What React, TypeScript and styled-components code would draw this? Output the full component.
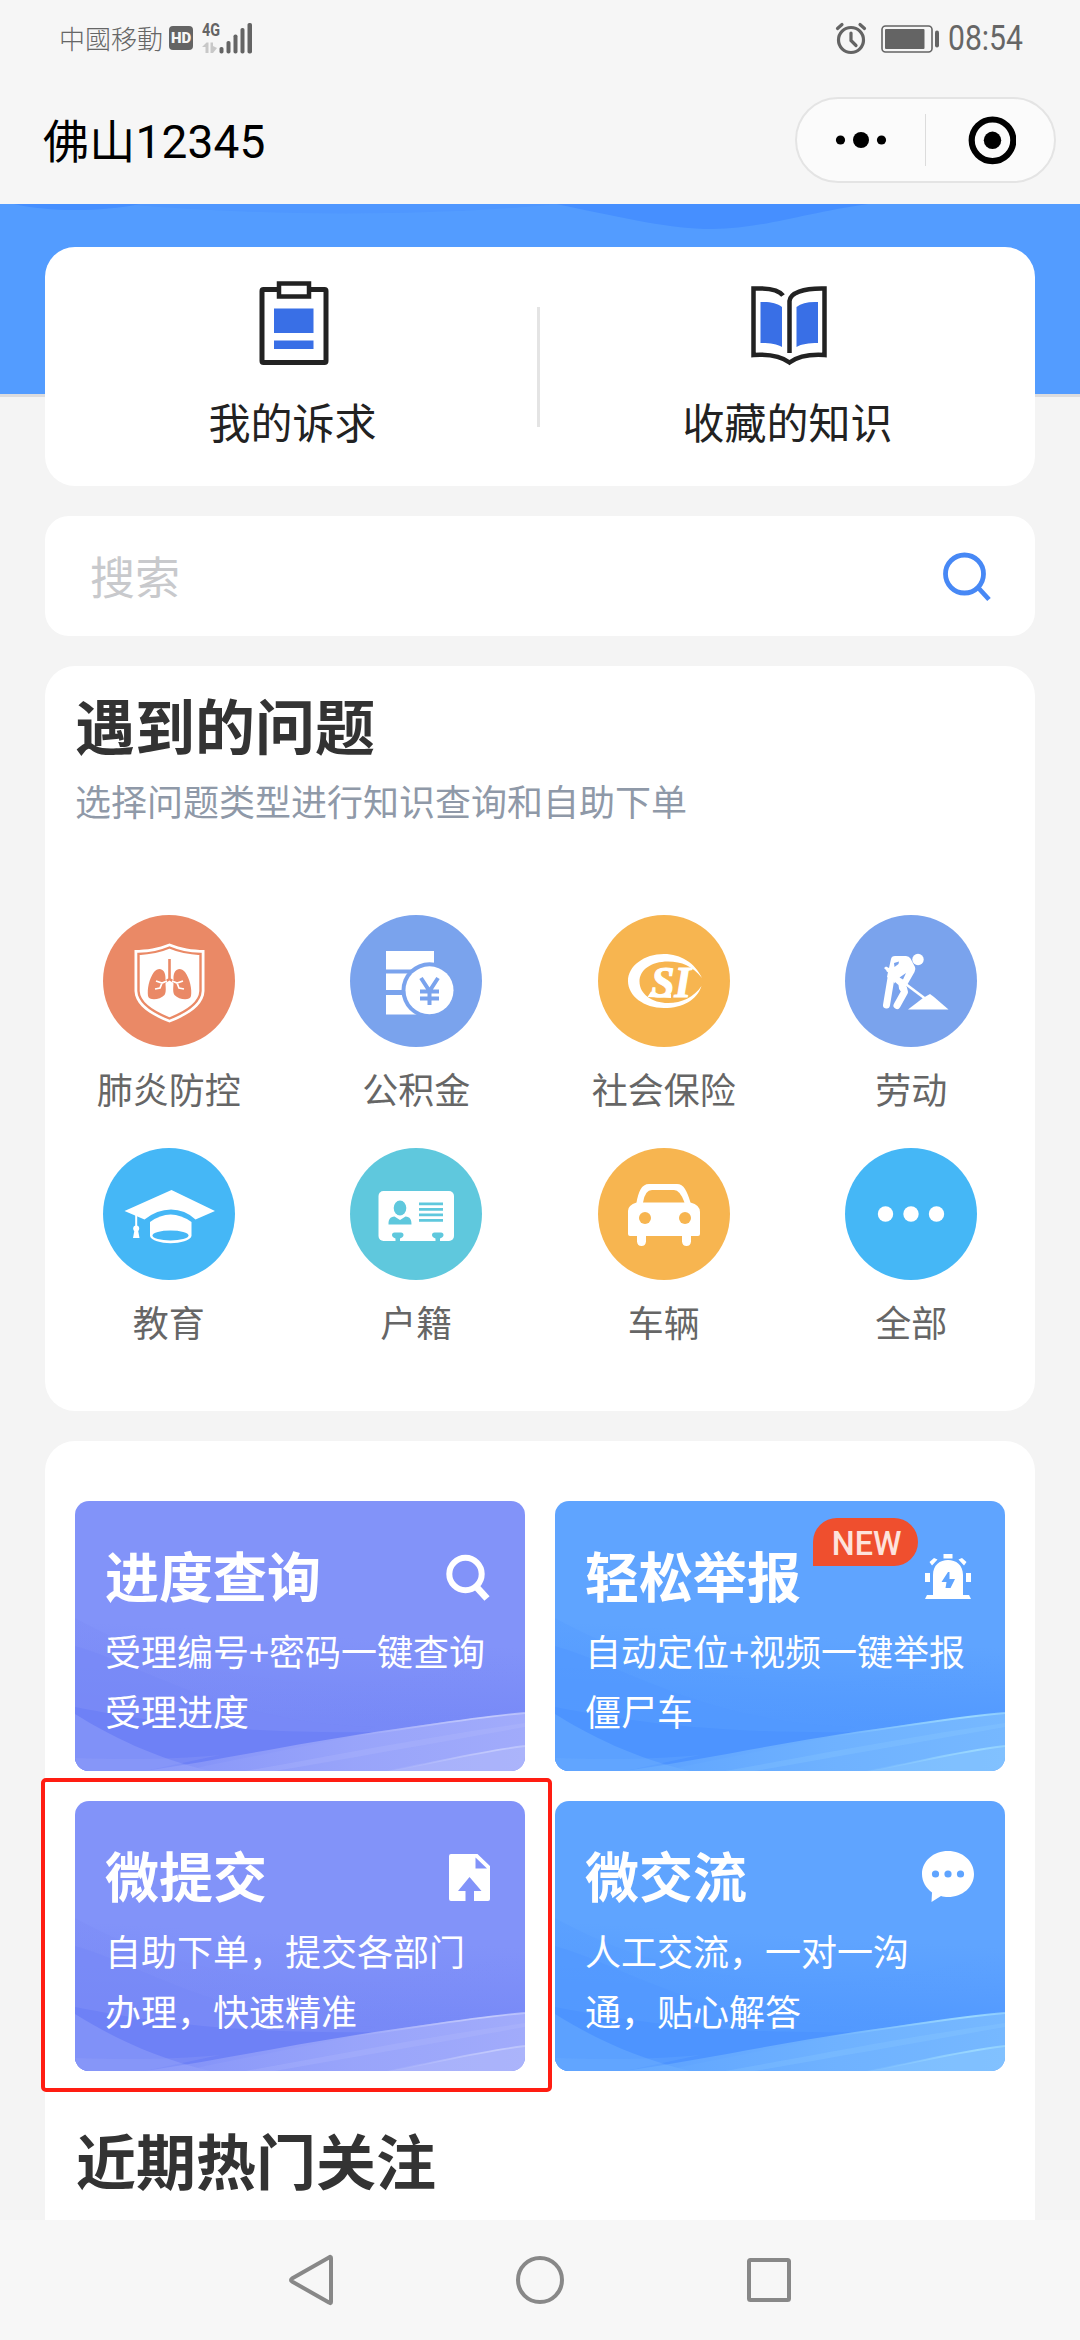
import React from 'react';
import styled, { createGlobalStyle } from 'styled-components';

const Global = createGlobalStyle`
  * { box-sizing: border-box; }
  body {
    margin: 0;
    background: #f4f4f4;
    font-family: "Noto Sans CJK SC", "Noto Sans", sans-serif;
  }
`;

const Screen = styled.div`
  width: 1080px;
  height: 2340px;
  display: flex;
  flex-direction: column;
  overflow: hidden;
  background: #f4f4f4;
`;

/* ---------- status bar and title bar ---------- */

const StatusBar = styled.div`
  height: 78px;
  flex: none;
  display: flex;
  align-items: center;
  justify-content: space-between;
  padding: 0 57px 0 59px;
  background: #f6f6f6;
  color: #666;
`;

const StatusGroup = styled.div`
  display: flex;
  align-items: center;
`;

const Carrier = styled.span`
  font: 300 26px/36px "Noto Sans CJK TC", sans-serif;
  margin: -3px 6px 0 0;
`;

const HdBadge = styled.span`
  width: 24px;
  height: 24px;
  margin-top: -2px;
  border-radius: 4px;
  background: #646464;
  color: #f6f6f6;
  font: 900 15px/24px Roboto, sans-serif;
  text-align: center;
`;

const Signal = styled.svg`
  width: 52px;
  height: 38px;
  margin: -9px 0 0 9px;
`;

const StatusIcons = styled.svg`
  width: 106px;
  height: 34px;
  margin: -3px 8px 0 0;
`;

const Clock = styled.span`
  width: 75px;
  font: 400 35px/36px Roboto, sans-serif;
  span {
    display: inline-block;
    transform: scaleX(0.86);
    transform-origin: 0 50%;
  }
`;

const TitleBar = styled.div`
  height: 126px;
  flex: none;
  display: flex;
  align-items: flex-start;
  justify-content: space-between;
  padding: 19px 24px 0 43px;
  background: #f6f6f6;
`;

const PageTitle = styled.h1`
  margin: 2px 0 0;
  font: 400 46px/86px Roboto, "Noto Sans CJK SC", sans-serif;
  letter-spacing: 0.2px;
  color: #000;
`;

const Capsule = styled.div`
  width: 261px;
  height: 86px;
  border: 2px solid #e4e4e4;
  border-radius: 43px;
  background: #fbfbfb;
  display: flex;
  align-items: center;
`;

const CapsuleButton = styled.button`
  flex: 1;
  height: 52px;
  padding: 0;
  border: 0;
  background: none;
  display: flex;
  align-items: center;
  justify-content: center;
  & + & {
    border-left: 1px solid #dcdcdc;
  }
`;

/* ---------- page ---------- */

const Content = styled.div`
  height: 2016px;
  flex: none;
  overflow: hidden;
`;

const Hero = styled.div`
  height: 193px;
  background: #539cff;
  border-bottom: 3px solid #dcdcde;
  svg { display: block; }
`;

const Main = styled.main`
  position: relative;
  margin: -150px 45px 0;
  display: flex;
  flex-direction: column;
  gap: 30px;
`;

const Card = styled.section<{ $height: number; $radius?: number }>`
  height: ${(p) => p.$height}px;
  border-radius: ${(p) => p.$radius ?? 30}px;
  background: #fff;
`;

const Shortcuts = styled(Card)`
  display: flex;
  align-items: center;
`;

const Shortcut = styled.div`
  flex: 1;
  height: 100%;
  padding-top: 32px;
  display: flex;
  flex-direction: column;
  align-items: center;
  svg { width: 90px; height: 90px; }
`;

const ShortcutLabel = styled.span`
  margin-top: 22px;
  font-size: 42px;
  line-height: 60px;
  color: #222;
`;

const Divider = styled.i`
  width: 3px;
  height: 120px;
  margin-left: -3px;
  background: #e4e4e4;
`;

const SearchBox = styled(Card)`
  display: flex;
  align-items: center;
  justify-content: space-between;
  padding: 0 43px 0 45px;
`;

const Placeholder = styled.span`
  font-size: 45px;
  line-height: 60px;
  color: #c8c9cc;
`;

const Heading = styled.h2`
  margin: 0;
  font-size: 60px;
  line-height: 84px;
  font-weight: 700;
  color: #333;
`;

const TopicHead = styled.header`
  padding: 16px 30px 0;
`;

const SubHeading = styled.p`
  margin: 7px 0 0;
  font-size: 36px;
  line-height: 54px;
  color: #8f99a8;
`;

const TopicGrid = styled.div`
  margin-top: 88px;
  display: grid;
  grid-template-columns: repeat(4, 1fr);
  grid-auto-rows: 233px;
`;

const Topic = styled.div`
  display: flex;
  flex-direction: column;
  align-items: center;
`;

const TopicIcon = styled.div<{ $color: string }>`
  width: 132px;
  height: 132px;
  border-radius: 50%;
  background: ${(p) => p.$color};
  color: ${(p) => p.$color};
  svg { display: block; }
`;

const TopicLabel = styled.span`
  margin-top: 14px;
  font-size: 36px;
  line-height: 54px;
  color: #666;
`;

const Services = styled(Card)`
  padding: 60px 30px 0;
`;

const ServiceGrid = styled.div`
  display: grid;
  grid-template-columns: 450px 450px;
  grid-auto-rows: 270px;
  gap: 30px;
`;

const Tile = styled.div`
  position: relative;
  padding: 41px 30px 0;
  color: #fff;
`;

const TileArt = styled.svg`
  position: absolute;
  inset: 0;
  border-radius: 14px;
`;

const TileHead = styled.div`
  position: relative;
  display: flex;
  justify-content: space-between;
  align-items: center;
  height: 70px;
`;

const TileTitle = styled.h3`
  margin: -4px 0 0;
  font-size: 54px;
  line-height: 70px;
  font-weight: 700;
`;

const TileIcon = styled.svg`
  width: 56px;
  height: 56px;
  flex: none;
  margin-right: -1px;
`;

const TileText = styled.p`
  position: relative;
  margin: 8px 0 0;
  font-size: 36px;
  line-height: 60px;
`;

const NewBadge = styled.span`
  position: absolute;
  left: 258px;
  top: 17px;
  width: 105px;
  height: 48px;
  border-radius: 24px 24px 24px 0;
  background: #ef4f2e;
  color: #fde3dc;
  font: 500 34px/50px Roboto, sans-serif;
  text-align: center;
  padding-left: 3px;
  span {
    display: inline-block;
    transform: scaleX(0.95);
  }
`;

const Highlight = styled.div`
  position: absolute;
  left: -34px;
  top: -23px;
  width: 511px;
  height: 314px;
  border: 4px solid #ff1d12;
  border-radius: 5px;
`;

const HotHeading = styled(Heading)`
  margin: 46px 0 0 1px;
`;

const NavBar = styled.nav`
  height: 120px;
  flex: none;
  display: flex;
  align-items: center;
  justify-content: center;
  gap: 173px;
  background: #f7f7f7;
  svg { width: 56px; height: 56px; fill: none; stroke: #888; stroke-width: 4; stroke-linejoin: round; }
`;

/* ---------- topic icons, drawn on a 132 grid ---------- */

const Icon132 = ({ children }: { children: React.ReactNode }) => (
  <svg width="132" height="132" viewBox="0 0 132 132" fill="#fff">{children}</svg>
);

const Lungs = () => (
  <Icon132>
    <path d="M66.500 28.500C55 33 44 35 31.500 35V76C32 90 47 100 66.500 107.500C86 100 101 90 101.500 76V35C89 35 78 33 66.500 28.500Z" />
    <path d="M66.500 32.500C56 37 46 38.500 35.500 39V76C36 88 49 96.500 66.500 103.500C84 96.500 97 88 97.500 76V39C87 38.500 77 37 66.500 32.500Z" fill="none" stroke="currentColor" strokeWidth="2.400" />
    <path d="M66.500 44V65M66.500 64L59 69M66.500 64L74 69" fill="none" stroke="currentColor" strokeWidth="2.600" />
    <g fill="currentColor">
      <path d="M62.500 64C63 54 56 51 51 57C46 64 44 74 45 81C46 86 57 85 61.500 80C64 76 62 70 62.500 64Z" />
      <path d="M70.500 64C70 54 77 51 82 57C87 64 89 74 88 81C87 86 76 85 71.500 80C69 76 71 70 70.500 64Z" />
    </g>
    <path d="M64 66L59 68L53 66M59 68L57 73L52 74M69 66L74 68L80 66M74 68L76 73L81 74" fill="none" stroke="#fff" strokeWidth="1.700" />
    <path d="M63.500 67H69.500V72H63.500Z" />
  </Icon132>
);

const Fund = () => (
  <Icon132>
    <path d="M36 36H84V54.500H36ZM36 58.500H70V75H36ZM36 80H70V99.500H36Z" />
    <circle cx="79.500" cy="75.300" r="28" fill="currentColor" />
    <circle cx="79.500" cy="75.300" r="24" />
    <path d="M71 63L79.500 76L88 63M79.500 75V90M70 76.500H89M70 83.500H89" fill="none" stroke="currentColor" strokeWidth="4" />
  </Icon132>
);

const Insurance = () => (
  <Icon132>
    <path d="M104 63C97 48 83 39 66 39C46 39 30 51 30 66C30 81 46 93 66 93C85 93 99 85 103.500 71C96 82 84 88 70 88C54 88 41.500 79 41.500 66.500C41.500 55 53 46.500 70 46.500C84 46.500 94 51 104 63Z" />
    <text x="53" y="82" fontFamily="Liberation Serif" fontWeight="700" fontStyle="italic" fontSize="45" stroke="#fff" strokeWidth="1.200" textLength="40" lengthAdjust="spacingAndGlyphs">SI</text>
    <path d="M49.500 82L53 76.500L60 80L73 79V83Z" />
  </Icon132>
);

const Labour = () => (
  <Icon132>
    <circle cx="73" cy="44.500" r="5.700" />
    <path d="M46 44Q46.500 41 50 41H61Q64 41 65.500 43.500L70 52Q71 54 69.500 57L61.500 71L55.500 76L48 66L42 62L43 57L39 53L41 51.500L44 53Z" />
    <path d="M46 63L41.500 90M58.500 73L59.500 77L52 90.500" fill="none" stroke="#fff" strokeWidth="7" strokeLinecap="round" strokeLinejoin="round" />
    <path d="M42 55L80 83.500" stroke="#fff" strokeWidth="2.600" />
    <path d="M49 48L54 46.500L53.500 49L49.500 52ZM54.500 62.500L61 58L58 64.500Z" fill="currentColor" />
    <path d="M53.500 70L54.500 77L49 86L50 67Z" fill="currentColor" />
    <path d="M63 94.500L78 83L85 79L89 82L103.500 94.500Z" />
  </Icon132>
);

const Education = () => (
  <Icon132>
    <path d="M68.500 42L112 63L92.500 71.500Q82 61.500 68 61.500Q54 61.500 41.500 71.500L21.500 63Z" />
    <path d="M47 74Q67.500 59 88.500 74V88C86 97.500 49 97.500 47 88Z" />
    <ellipse cx="67.500" cy="87.500" rx="18" ry="5" fill="currentColor" />
    <path d="M32.200 67H34.200V79H32.200Z" />
    <circle cx="33.200" cy="80.500" r="3" />
    <path d="M31.500 82H35L36.500 90H30Z" />
  </Icon132>
);

const Household = () => (
  <Icon132>
    <rect x="28.500" y="43" width="75.500" height="50" rx="5" />
    <g fill="currentColor">
      <ellipse cx="50" cy="60" rx="6.300" ry="7.600" />
      <path d="M38.500 76.500C38.500 71 40 69 44.500 68.500L50 72L55.500 68.500C60 69 61.500 71 61.500 76.500Z" />
      <path d="M69 54.500H93V57.200H69ZM69 60H93V62.700H69ZM69 65.500H93V68.200H69ZM69 71H93V73.700H69Z" />
      <path d="M42 87Q42 84.500 44.500 84.500H51Q53.500 84.500 53.500 87Q53.500 89 50 90.500V93.500H45.500V90.500Q42 89 42 87ZM82 87Q82 84.500 84.500 84.500H91Q93.500 84.500 93.500 87Q93.500 89 90 90.500V93.500H85.500V90.500Q82 89 82 87Z" />
    </g>
  </Icon132>
);

const Car = () => (
  <Icon132>
    <path d="M30 63Q30 57 38.500 54.500Q40 46 42.500 41.500Q45.500 36 51 36H79Q84 36 87 41Q90 46 92.500 54.500Q102 57 102 64V86Q102 88 100 88H93V93.500Q92.500 98 88.500 98Q84.500 98 84 93.500V88H48V93.500Q47.500 98 43.500 98Q39.500 98 39 93.500V88H32Q30 88 30 86Z" />
    <g fill="currentColor">
      <path d="M45 54.500Q47 42 54 42H76Q82 42 86.500 54.500Z" />
      <circle cx="47" cy="70" r="6" />
      <circle cx="87" cy="70" r="6" />
    </g>
  </Icon132>
);

const More = () => (
  <Icon132>
    <circle cx="40.500" cy="66" r="7.700" />
    <circle cx="66" cy="66" r="7.700" />
    <circle cx="91.500" cy="66" r="7.700" />
  </Icon132>
);

const topics = [
  { label: '肺炎防控', color: '#ea8966', Icon: Lungs },
  { label: '公积金', color: '#7aa3ed', Icon: Fund },
  { label: '社会保险', color: '#f7b550', Icon: Insurance },
  { label: '劳动', color: '#7aa3ed', Icon: Labour },
  { label: '教育', color: '#45b7f6', Icon: Education },
  { label: '户籍', color: '#5fc8dd', Icon: Household },
  { label: '车辆', color: '#f7b550', Icon: Car },
  { label: '全部', color: '#45b7f6', Icon: More },
];

/* ---------- service tiles ---------- */

const palettes = {
  purple: { top: '#8293f9', mid: '#7789f7', deep: '#6e81f6', soft: '#8091f8', glow: '#a1abfb', line: '#c3cafd', accent: '#7c8cf6' },
  blue: { top: '#5fa4ff', mid: '#5299ff', deep: '#4d94ff', soft: '#5ca1ff', glow: '#76b8ff', line: '#9ad8ff', accent: '#569cff' },
};

type Tone = keyof typeof palettes;

const Waves = ({ tone }: { tone: Tone }) => {
  const c = palettes[tone];
  const id = `tile-${tone}`;
  return (
    <TileArt width="450" height="270" viewBox="0 0 450 270">
      <defs>
        <linearGradient id={`${id}-bg`} x1="0.1" y1="0" x2="0" y2="1">
          <stop offset="0" stopColor={c.top} />
          <stop offset="0.45" stopColor={c.top} />
          <stop offset="0.75" stopColor={c.mid} />
          <stop offset="1" stopColor={c.mid} />
        </linearGradient>
        <linearGradient id={`${id}-glow`} x1="0" y1="0" x2="1" y2="0">
          <stop offset="0" stopColor={c.glow} stopOpacity="0.35" />
          <stop offset="0.55" stopColor={c.glow} stopOpacity="0.8" />
          <stop offset="1" stopColor={c.glow} />
        </linearGradient>
        <linearGradient id={`${id}-fade`} x1="0" y1="0" x2="1" y2="0">
          <stop offset="0" stopColor={c.accent} stopOpacity="0.9" />
          <stop offset="1" stopColor={c.accent} stopOpacity="0" />
        </linearGradient>
        <linearGradient id={`${id}-line`} x1="0" y1="0" x2="1" y2="0">
          <stop offset="0" stopColor={c.line} stopOpacity="0" />
          <stop offset="0.8" stopColor={c.line} />
          <stop offset="1" stopColor={c.line} stopOpacity="0.7" />
        </linearGradient>
      </defs>
      <rect width="450" height="270" fill={`url(#${id}-bg)`} />
      <path d="M0 117C60 150 110 165 200 178C290 190 380 170 450 150V230H0Z" fill={`url(#${id}-fade)`} opacity="0.5" />
      <path d="M0 145C70 165 150 222 300 226L260 236L0 220Z" fill={c.mid} opacity="0.7" />
      <path d="M0 206C80 222 170 233 300 231L130 265L110 270H0Z" fill={c.deep} />
      <path d="M0 213C35 235 80 257 135 270H0Z" fill={c.soft} />
      <path d="M0 257C60 259 100 258 145 254L70 270H0Z" fill={c.glow} opacity="0.2" />
      <path d="M70 270C150 258 220 243 300 231C350 224 400 216 450 212V270Z" fill={`url(#${id}-glow)`} />
      <path d="M170 270C260 254 350 236 450 222V226C360 242 280 256 200 270Z" fill={c.line} opacity="0.18" />
      <path d="M312 270C360 262 400 251 450 245V270Z" fill={c.line} opacity="0.3" />
      <path d="M270 236C340 227 400 216 450 212" fill="none" stroke={`url(#${id}-line)`} strokeWidth="1.800" />
      <path d="M312 270C360 262 400 251 450 245" fill="none" stroke={`url(#${id}-line)`} strokeWidth="1.800" />
    </TileArt>
  );
};

const SearchGlyph = () => (
  <TileIcon viewBox="0 0 56 56" fill="none" stroke="#fff">
    <circle cx="25.500" cy="25" r="16.200" strokeWidth="6" />
    <path d="M36.500 38L47 49.500" strokeWidth="7" />
  </TileIcon>
);

const SirenGlyph = () => (
  <TileIcon viewBox="0 0 56 56" fill="#fff">
    <path d="M23.500 5H32.500V9.500H23.500ZM5 24H10V33H5ZM46 24H51V33H46ZM9.500 13L14 9L17.500 10.500L12 16.500ZM46.500 13L42 9L38.500 10.500L44 16.500Z" />
    <path d="M13 46V26C13 16 20 11 28 11C36 11 43 16 43 26V46H49L51 50H5L7 46Z" />
    <path d="M28 23L21.500 33H26.500L25.500 39H30.500L35 30H29.500V23Z" fill="#5fa4ff" />
  </TileIcon>
);

const UploadGlyph = () => (
  <TileIcon viewBox="0 0 56 56" fill="#fff">
    <path fillRule="evenodd" d="M9 5H37.500L50 17V50Q50 52 48 52H34V42H41.500L29.500 28L18 42H25.500V52H11Q9 52 9 50V7Q9 5 11 5ZM35.500 8.500V19.500H47Z" />
  </TileIcon>
);

const ChatGlyph = () => (
  <TileIcon viewBox="0 0 56 56" fill="#fff">
    <path d="M28 2C42.500 2 54 12 54 25C54 38 42.500 48 28 48C25.500 48 23 47.800 21 47L11.500 53L12 43.500C6 39 2 32.500 2 25C2 12 13.500 2 28 2Z" />
    <g fill="#5fa4ff">
      <circle cx="15.500" cy="25" r="3.600" />
      <circle cx="28" cy="25" r="3.600" />
      <circle cx="40.500" cy="25" r="3.600" />
    </g>
  </TileIcon>
);

const services: {
  title: string; text: string; tone: Tone; Icon: React.FC; isNew?: boolean; marked?: boolean;
}[] = [
  { title: '进度查询', text: '受理编号+密码一键查询受理进度', tone: 'purple', Icon: SearchGlyph },
  { title: '轻松举报', text: '自动定位+视频一键举报僵尸车', tone: 'blue', Icon: SirenGlyph, isNew: true },
  { title: '微提交', text: '自助下单，提交各部门办理，快速精准', tone: 'purple', Icon: UploadGlyph, marked: true },
  { title: '微交流', text: '人工交流，一对一沟通，贴心解答', tone: 'blue', Icon: ChatGlyph },
];

export default function App() {
  return (
    <Screen>
      <Global />
      <StatusBar>
        <StatusGroup>
          <Carrier>中國移動</Carrier>
          <HdBadge>HD</HdBadge>
          <Signal viewBox="0 0 52 38" fill="#646464">
            <text x="0" y="20" fontFamily="Roboto" fontWeight="700" fontSize="18" textLength="18" lengthAdjust="spacingAndGlyphs">4G</text>
            <path d="M0 31L4.500 26.500H6.500V37H3.500V31ZM8.500 26.500H11V30L15 32L11 37H8.500Z" fill="#c8c8c8" />
            <rect x="17.500" y="31" width="4" height="6.500" rx="1.800" />
            <rect x="24.500" y="25" width="4" height="12.500" rx="1.800" />
            <rect x="31.500" y="18.500" width="4" height="19" rx="1.800" />
            <rect x="38.500" y="12" width="4" height="25.500" rx="1.800" />
            <rect x="45.500" y="7" width="4.500" height="30.500" rx="1.800" />
          </Signal>
        </StatusGroup>
        <StatusGroup>
          <StatusIcons viewBox="0 0 106 34" fill="none" stroke="#646464">
            <circle cx="17" cy="19" r="12.500" strokeWidth="3.200" />
            <path d="M17 12V19.500L22 24.500" strokeWidth="3.200" strokeLinecap="round" />
            <path d="M3.500 7.500L8 3.500M30.500 7.500L26 3.500" strokeWidth="3.200" strokeLinecap="round" />
            <rect x="48" y="5" width="50" height="26" rx="3.500" strokeWidth="1.600" />
            <rect x="51" y="8" width="39.500" height="20" rx="1" fill="#646464" stroke="none" />
            <rect x="101" y="9.500" width="4" height="17" rx="2" fill="#646464" stroke="none" />
          </StatusIcons>
          <Clock><span>08:54</span></Clock>
        </StatusGroup>
      </StatusBar>

      <TitleBar>
        <PageTitle>佛山12345</PageTitle>
        <Capsule>
          <CapsuleButton>
            <svg width="56" height="20" viewBox="0 0 56 20">
              <circle cx="7.500" cy="10" r="4.600" />
              <circle cx="28" cy="10" r="8" />
              <circle cx="48.500" cy="10" r="4.600" />
            </svg>
          </CapsuleButton>
          <CapsuleButton>
            <svg width="52" height="52" viewBox="0 0 52 52">
              <circle cx="28.500" cy="26.300" r="20.800" fill="none" stroke="#000" strokeWidth="6.200" />
              <circle cx="28.500" cy="26.300" r="8.700" />
            </svg>
          </CapsuleButton>
        </Capsule>
      </TitleBar>

      <Content>
        <Hero>
          <svg width="1080" height="40" viewBox="0 0 1080 40">
            <path d="M120 0C260 12 420 13 560 0Z" fill="#4f97ff" />
            <path d="M14 0C50 8 100 8 140 0Z" fill="#468fff" />
            <path d="M556 0C630 15 670 25 712 25C760 25 800 10 868 0Z" fill="#468fff" />
          </svg>
        </Hero>
        <Main>
          <Shortcuts $height={239}>
            <Shortcut>
              <svg viewBox="0 0 90 90" fill="none" stroke="#222">
                <path d="M31 10.500H15.500Q14 10.500 14 12V82Q14 83.500 15.500 83.500H76.500Q78 83.500 78 82V12Q78 10.500 76.500 10.500H61" strokeWidth="5" />
                <rect x="31" y="4.500" width="30" height="13" strokeWidth="4.500" />
                <path d="M26 29.500H65.500V54H26ZM26 61.500H65.500V70H26Z" fill="#396fe6" stroke="none" />
              </svg>
              <ShortcutLabel>我的诉求</ShortcutLabel>
            </Shortcut>
            <Divider />
            <Shortcut>
              <svg viewBox="0 0 90 90" fill="none">
                <path d="M46.500 74V22C47 14 60 9 81.500 9.500V76C66 75 54 78 46.500 83.500C39 78 26 75 10.500 76V9.500C24 9 36 11 40 16.500" stroke="#222" strokeWidth="4.500" />
                <path d="M17.500 23C27 22.500 34 24 39 28V68C34 65 27 64 17.500 64ZM75 23C65.500 22.500 58.500 24 53.500 28V68C58.500 65 65.500 64 75 64Z" fill="#396fe6" />
              </svg>
              <ShortcutLabel>收藏的知识</ShortcutLabel>
            </Shortcut>
          </Shortcuts>

          <SearchBox $height={120} $radius={24}>
            <Placeholder>搜索</Placeholder>
            <svg width="54" height="54" viewBox="0 0 54 54" fill="none" stroke="#4788f5" strokeWidth="4.800">
              <circle cx="26.500" cy="25" r="19" />
              <path d="M40 38.500L51 50.500" />
            </svg>
          </SearchBox>

          <Card $height={745}>
            <TopicHead>
              <Heading>遇到的问题</Heading>
              <SubHeading>选择问题类型进行知识查询和自助下单</SubHeading>
            </TopicHead>
            <TopicGrid>
              {topics.map(({ label, color, Icon }) => (
                <Topic key={label}>
                  <TopicIcon $color={color}><Icon /></TopicIcon>
                  <TopicLabel>{label}</TopicLabel>
                </Topic>
              ))}
            </TopicGrid>
          </Card>

          <Services $height={860}>
            <ServiceGrid>
              {services.map(({ title, text, tone, Icon, isNew, marked }) => (
                <Tile key={title}>
                  <Waves tone={tone} />
                  <TileHead>
                    <TileTitle>{title}</TileTitle>
                    <Icon />
                  </TileHead>
                  <TileText>{text}</TileText>
                  {isNew && <NewBadge><span>NEW</span></NewBadge>}
                  {marked && <Highlight />}
                </Tile>
              ))}
            </ServiceGrid>
            <HotHeading>近期热门关注</HotHeading>
          </Services>
        </Main>
      </Content>

      <NavBar>
        <svg viewBox="0 0 56 56"><path d="M48 6V50Q48 52 46 50.500L9 29.500Q7 28 9 26.500L46 5.500Q48 4 48 6Z" /></svg>
        <svg viewBox="0 0 56 56"><circle cx="28" cy="28" r="22" /></svg>
        <svg viewBox="0 0 56 56"><rect x="8" y="8" width="40" height="40" rx="1.500" /></svg>
      </NavBar>
    </Screen>
  );
}
